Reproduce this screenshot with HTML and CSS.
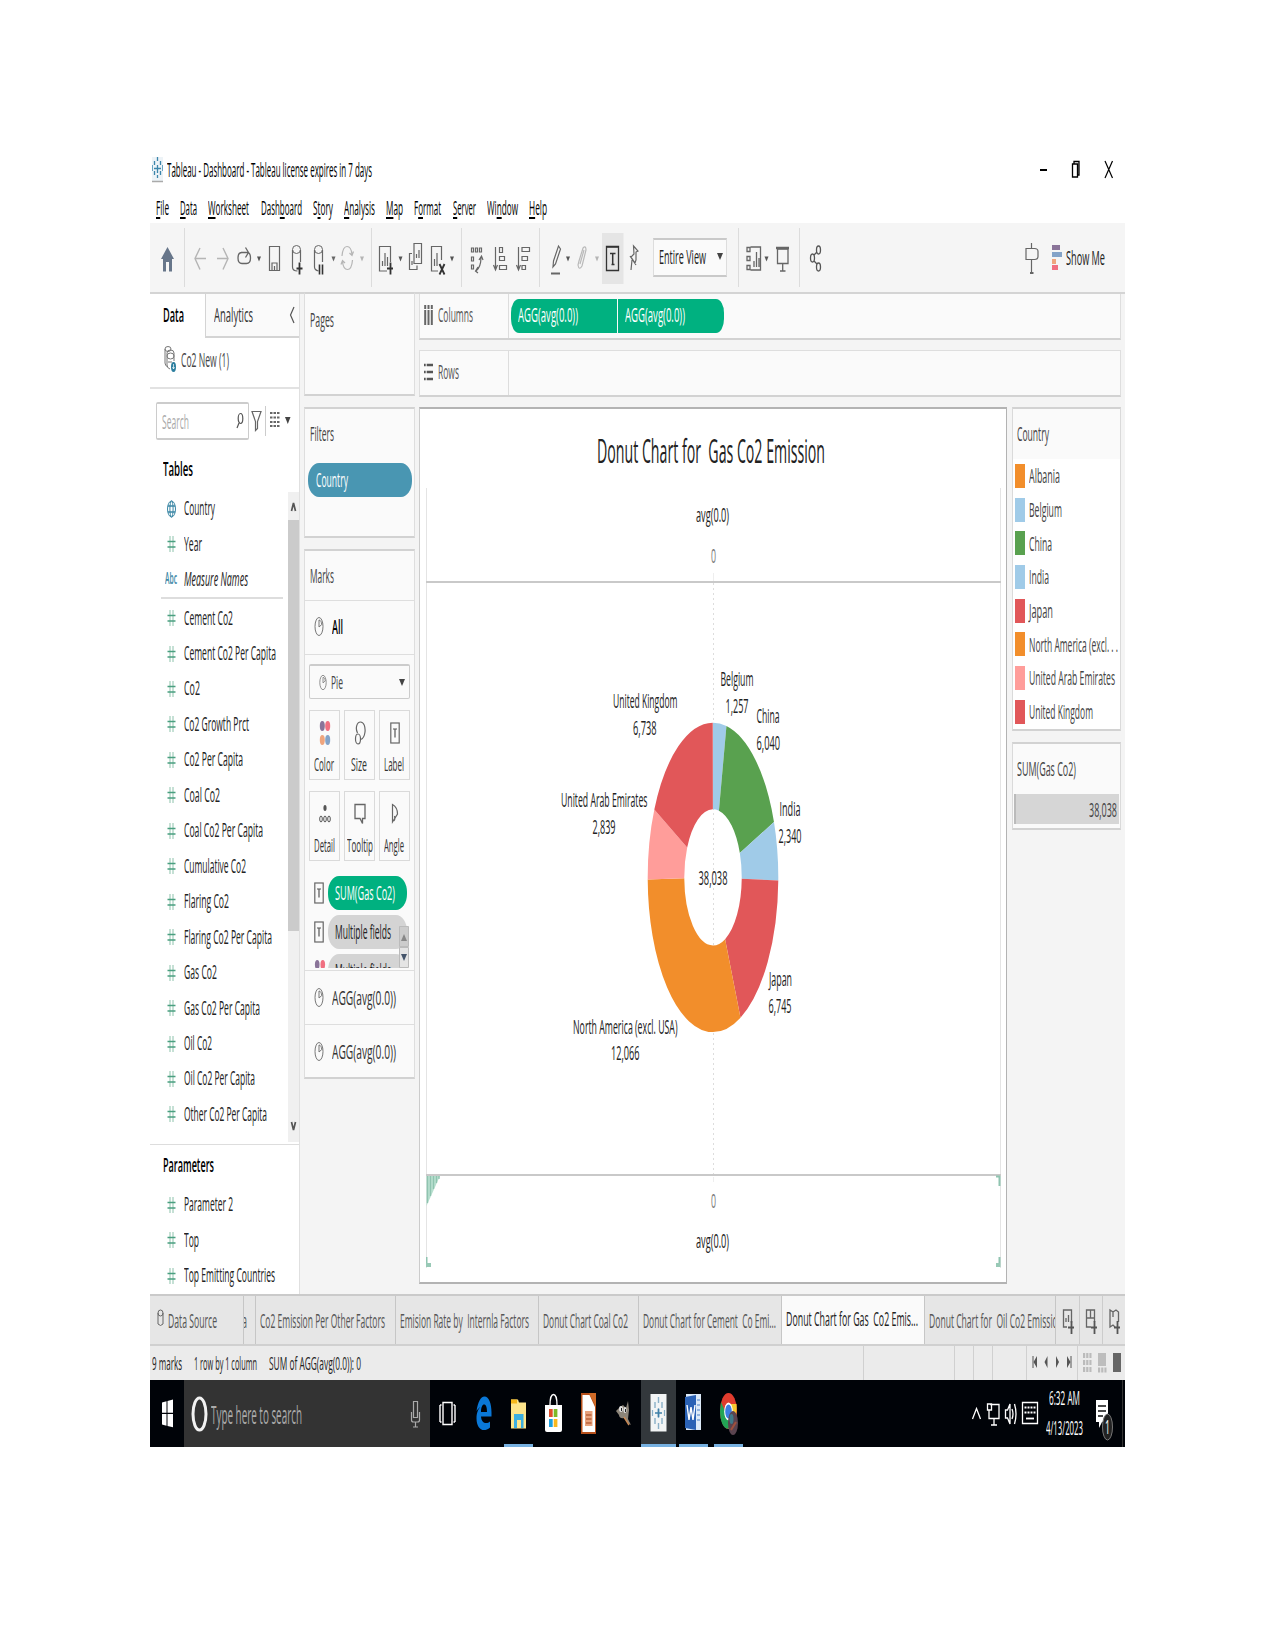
FILE: index.html
```html
<!DOCTYPE html>
<html lang="en">
<head>
<meta charset="utf-8">
<title>Tableau - Dashboard</title>
<link rel="stylesheet" href="styles.css">
</head>
<body>
<svg width="0" height="0" class="defs">
  <symbol id="hash" viewBox="0 0 9 18"><path d="M3 1v16M6 1v16" stroke="#8cc2ab" stroke-width="1"/><path d="M.5 6.5h8M.5 12h8" stroke="#4a9f80" stroke-width="1.6"/></symbol>
  <symbol id="pie" viewBox="0 0 10 21"><ellipse cx="5" cy="10.500" rx="4" ry="9" fill="none" stroke="#777"/><path d="M5 11V4c1.500 0 2.500 2 2.800 4.500z" fill="none" stroke="#777"/></symbol>
  <symbol id="tbox" viewBox="0 0 10 22"><rect x=".8" y="1" width="8.400" height="20" fill="none" stroke="#666" stroke-width="1.200"/><path d="M3 7h4M5 7v8.500" stroke="#555" stroke-width="1.200"/></symbol>
</svg>
<div class="screen">
  <header class="title">
    <svg width="12" height="26" viewBox="152 157 12 26"><path d="M152 157h11v24h-11z" fill="#edf3f7"/><path d="M152 181.500h11" stroke="#aaa" stroke-width="1.500"/><path d="M157.500 157v4M157.500 165v8M157.500 175v3M154.500 161v4M160.500 161v4M154.500 171v4M160.500 171v4M154 168.500h7" stroke="#3c86ab" stroke-width="1.300"/><path d="M152.500 165v6M162.500 165v6" stroke="#6aa5c2"/></svg>
    <span class="t" data-w="205">Tableau - Dashboard - Tableau license expires in 7 days</span>
    <svg class="push" width="90" height="40" viewBox="1030 150 90 40" fill="none" stroke="#000"><path d="M1039 168h7" stroke-width="2"/><path d="M1071.500 162h5v13h-5zM1073 162v-2.500h5V173h-1.500" stroke-width="1.300"/><path d="M1104 159l7.500 17M1111.500 159l-7.500 17" stroke-width="1.200"/></svg>
  </header>
  <nav class="menu">
    <span class="t" data-w="13"><u>F</u>ile</span><span class="t" data-w="17"><u>D</u>ata</span><span class="t" data-w="41"><u>W</u>orksheet</span><span class="t" data-w="41">Dash<u>b</u>oard</span><span class="t" data-w="20">S<u>t</u>ory</span><span class="t" data-w="31"><u>A</u>nalysis</span><span class="t" data-w="17"><u>M</u>ap</span><span class="t" data-w="27">F<u>o</u>rmat</span><span class="t" data-w="23"><u>S</u>erver</span><span class="t" data-w="31">Wi<u>n</u>dow</span><span class="t" data-w="18"><u>H</u>elp</span>
  </nav>
  <div class="toolbar">
    <svg width="34" height="69" viewBox="150 223 34 69"><path d="M161 259l6.500-12 6.500 12h-2v12.500h-3V262h-3v9.500h-3V259z" fill="#67768a"/></svg>
    <i class="sep"></i>
    <svg width="186" height="69" viewBox="185 223 186 69" fill="none" stroke="#666">
      <path d="M206 258.500h-11M200 248l-5 10.500 5 11M217 258.500h11M223 248l5 10.500-5 11" stroke="#b5b5b5" stroke-width="1.400"/>
      <path d="M242 252.500q-4 0-4 5.500t4 5.500h4.500q4 0 4-5.500 0-3.500-1.500-5M241 252.500h7M245.500 247.500l3 5-3 5" stroke-width="1.300"/>
      <path d="M269.500 246.500h10v24h-10zM272 270v-7h5v7M274.500 270v-4" stroke-width="1.200"/>
      <path d="M292.500 250v17q0 4 5 4M300.500 250v12" stroke-width="1.200"/><ellipse cx="296.500" cy="249.500" rx="4" ry="4"/><path d="M299.500 262.500v12M296.500 268.500h6" stroke="#333" stroke-width="1.800"/>
      <path d="M314.500 250v17q0 3 4 4M322.500 250v12" stroke-width="1.200"/><ellipse cx="318.500" cy="249.500" rx="4" ry="4"/><path d="M319.500 264.500v10M322.500 264.500v10" stroke="#333" stroke-width="1.600"/>
      <path d="M342 256c.5-6 2.500-9.500 5-9.500s4.500 3 5 8M352.500 260c-.5 6-2.500 9.500-5 9.500s-4.500-3-5-8M349.500 253l2.500 2.500 1.500-4M345 263l-2.500-2.500-1.500 4" stroke="#b5b5b5" stroke-width="1.200"/>
      <path d="M257 256.500h4l-2 5z" fill="#555" stroke="none"/><path d="M331.500 256.500h4l-2 5z" fill="#666" stroke="none"/><path d="M360 256.500h4l-2 5z" fill="#b5b5b5" stroke="none"/>
    </svg>
    <i class="sep"></i>
    <svg width="89" height="69" viewBox="372 223 89 69" fill="none" stroke="#666" stroke-width="1.200">
      <path d="M387 271h-7.500v-24.500h11V262M382.500 266v-5M385 266v-13M387.500 266v-9"/><path d="M390.500 262.500v12M387 268.500h6" stroke="#333" stroke-width="1.800"/>
      <path d="M414 243.500h7.500v20h-7.500zM412 253.500h-2.500v16h7.500v-4M416.500 258v-4M419 258v-8M412 265v-4"/>
      <path d="M438 271h-6.500v-24.500h10V260M434.500 266v-7M437 266v-13"/><path d="M439.500 264l5 10.500M444.500 264l-5 10.500" stroke="#333" stroke-width="1.800"/>
      <path d="M398.500 256.500h4l-2 5zM450 256.500h4l-2 5z" fill="#555" stroke="none"/>
    </svg>
    <i class="sep"></i>
    <svg width="77" height="69" viewBox="462 223 77 69" fill="none" stroke="#666" stroke-width="1.200">
      <path d="M471.500 248h2v4h-2zM475.500 248h2v4h-2zM479.500 248h2v4h-2zM471.500 257h2v4h-2zM471.500 265h2v4h-2zM481 257c0 7-1 11-5 14M479 260l2.500-4 1.500 4M478 267l-2.500 4 2.500 2"/>
      <path d="M495.500 247v23M493.500 265l2 5 2-5M499.500 247.500h3v5h-3zM499.500 256.500h5v4h-5zM499.500 265.500h7v4h-7z"/>
      <path d="M518.500 247v23M516.500 265l2 5 2-5M522 247.500h7.500v4H522zM522 256.500h5.500v4H522zM522 265.500h3.500v4H522z"/>
    </svg>
    <i class="sep"></i>
    <svg width="113" height="69" viewBox="540 223 113 69" fill="none" stroke="#666" stroke-width="1.200">
      <path d="M553.500 261l5-15 2 3-5 15-2.500 3z"/><path d="M551 273.500h9" stroke-width="2"/><path d="M566 256.500h4l-2 5z" fill="#555" stroke="none"/>
      <path d="M579 261l4-13q3-3 3 2l-4 16q-3 5-4-1zM580 264l4-14" stroke="#b9b9b9"/><path d="M595 256.500h4l-2 5z" fill="#b5b5b5" stroke="none"/>
      <path d="M602 233h21.500v51H602z" fill="#e5e5e5" stroke="none"/><path d="M606.500 246.500h12v24h-12z" stroke="#333" stroke-width="1.300"/><path d="M606 247h13M610 253.500h5.500M612.700 253.500v11M611.500 264.500h3" stroke="#333" stroke-width="1.500"/>
      <path d="M633.500 246l4.500 5-2 1v8l-1 3-4-6 3-3zM632 260l-1 10M630 256l6 9"/>
    </svg>
    <div class="select"><span class="t" data-w="47">Entire View</span><b class="caret"></b></div>
    <i class="sep s2"></i>
    <svg width="60" height="69" viewBox="739 223 60 69" fill="none" stroke="#666" stroke-width="1.300">
      <path d="M750.500 247h10v23h-10M747 247.500h3v4h-3zM747 256.500h3v4h-3zM747 265.500h3v4h-3zM754 267v-6M756.500 267v-15M759 267v-9"/><path d="M764.500 256.500h4l-2 5z" fill="#555" stroke="none"/>
      <path d="M777.500 249h10.500v14.500h-10.500zM782.700 264v7M780 271h5.500"/><path d="M776 248h13" stroke-width="2.500"/>
    </svg>
    <i class="sep"></i>
    <svg width="26" height="69" viewBox="800 223 26 69" fill="none" stroke="#555" stroke-width="1.300"><ellipse cx="812.500" cy="258" rx="2" ry="4"/><ellipse cx="818.500" cy="250" rx="2" ry="4"/><ellipse cx="818.500" cy="267" rx="2" ry="4"/><path d="M814 255l3-3M814 261l3 3"/></svg>
    <svg class="push" width="42" height="69" viewBox="1024 223 42 69" fill="none" stroke="#666" stroke-width="1.200"><path d="M1026 248.500h8.500q3.500 0 3.500 3v5q0 3-3.500 3h-8.500zM1031.500 243v5M1031.500 260v13"/><path d="M1030 273h3.500" stroke-width="2"/><g stroke="none"><path d="M1052 245h8v5h-8z" fill="#8a7499"/><path d="M1052 252h10v5h-10z" fill="#84a3c8"/><path d="M1052 259h4v5h-4z" fill="#efa57e"/><path d="M1052 265h6v5h-6z" fill="#f06f80"/></g></svg>
    <span class="t" data-w="39">Show Me</span>
  </div>

  <div class="work">
    <aside class="data">
      <div class="tabs2"><div class="tab-on"><span class="t" data-w="21">Data</span></div><div class="tab-off"><span class="t" data-w="39">Analytics</span><svg width="6" height="18" viewBox="0 0 6 18"><path d="M5 1L1.500 9 5 17" fill="none" stroke="#555" stroke-width="1.200"/></svg></div></div>
      <div class="source"><svg width="13" height="28" viewBox="164 348 13 28" fill="none" stroke="#777"><ellipse cx="168" cy="351" rx="3" ry="2.500"/><path d="M165 351v14q0 3 3 4M167 355q0-3 3.500-3t3.500 3v8M167 355v12q0 3 3 4"/><ellipse cx="170.500" cy="358" rx="3.500" ry="3"/><path d="M168 364h4"/><ellipse cx="173.500" cy="369" rx="2.500" ry="5" fill="#2d7f9f" stroke="none"/><path d="M173.500 366v5M172.500 369l1 2 1-2" stroke="#fff" stroke-width=".7"/></svg><span class="t" data-w="48">Co2 New (1)</span></div>
      <div class="searchrow">
        <div class="search"><span class="t" data-w="27">Search</span><svg width="8" height="18" viewBox="0 0 8 18" fill="none" stroke="#555" stroke-width="1.200"><ellipse cx="4.500" cy="6.500" rx="2.300" ry="5"/><path d="M3 11l-2 5"/></svg></div>
        <svg width="42" height="38" viewBox="250 402 42 38" fill="none" stroke="#666"><path d="M252 411.500h9l-3.500 10v7l-2 2v-9z" stroke-width="1.200"/><path d="M265.500 406v30" stroke="#ccc"/><path d="M270 413h9.500M270 417.500h9.500M270 422h9.500M270 426h9.500" stroke-width="1.800" stroke-dasharray="2.500 1"/><path d="M285 417h5.500l-2.700 7z" fill="#444" stroke="none"/></svg>
      </div>
      <div class="bold h-tables"><span class="t" data-w="30">Tables</span></div>
      <div class="listwrap">
        <div class="list">
          <div class="f"><svg width="9" height="18" viewBox="0 0 9 18" fill="none" stroke="#3b87a5"><ellipse cx="4.500" cy="9" rx="4" ry="8"/><ellipse cx="4.500" cy="9" rx="1.600" ry="8"/><path d="M1 6h7M1 12h7" stroke-width="1.500"/></svg><span class="t" data-w="31">Country</span></div>
          <div class="f"><svg width="9" height="18"><use href="#hash"/></svg><span class="t" data-w="18">Year</span></div>
          <div class="f"><span class="abc"><span class="t" data-w="12">Abc</span></span><em class="t" data-w="64">Measure Names</em></div>
          <hr>
          <div class="f"><svg width="9" height="18"><use href="#hash"/></svg><span class="t" data-w="49">Cement Co2</span></div>
          <div class="f"><svg width="9" height="18"><use href="#hash"/></svg><span class="t" data-w="92">Cement Co2 Per Capita</span></div>
          <div class="f"><svg width="9" height="18"><use href="#hash"/></svg><span class="t" data-w="16">Co2</span></div>
          <div class="f"><svg width="9" height="18"><use href="#hash"/></svg><span class="t" data-w="65">Co2 Growth Prct</span></div>
          <div class="f"><svg width="9" height="18"><use href="#hash"/></svg><span class="t" data-w="59">Co2 Per Capita</span></div>
          <div class="f"><svg width="9" height="18"><use href="#hash"/></svg><span class="t" data-w="36">Coal Co2</span></div>
          <div class="f"><svg width="9" height="18"><use href="#hash"/></svg><span class="t" data-w="79">Coal Co2 Per Capita</span></div>
          <div class="f"><svg width="9" height="18"><use href="#hash"/></svg><span class="t" data-w="62">Cumulative Co2</span></div>
          <div class="f"><svg width="9" height="18"><use href="#hash"/></svg><span class="t" data-w="45">Flaring Co2</span></div>
          <div class="f"><svg width="9" height="18"><use href="#hash"/></svg><span class="t" data-w="88">Flaring Co2 Per Capita</span></div>
          <div class="f"><svg width="9" height="18"><use href="#hash"/></svg><span class="t" data-w="33">Gas Co2</span></div>
          <div class="f"><svg width="9" height="18"><use href="#hash"/></svg><span class="t" data-w="76">Gas Co2 Per Capita</span></div>
          <div class="f"><svg width="9" height="18"><use href="#hash"/></svg><span class="t" data-w="28">Oil Co2</span></div>
          <div class="f"><svg width="9" height="18"><use href="#hash"/></svg><span class="t" data-w="71">Oil Co2 Per Capita</span></div>
          <div class="f"><svg width="9" height="18"><use href="#hash"/></svg><span class="t" data-w="83">Other Co2 Per Capita</span></div>
        </div>
        <div class="scroll"><svg width="11" height="28" viewBox="0 0 11 28"><path d="M3.500 19l2-8 2 8" fill="none" stroke="#555" stroke-width="1.700"/></svg><i></i><svg width="11" height="28" viewBox="0 0 11 28"><path d="M3.500 8l2 8 2-8" fill="none" stroke="#555" stroke-width="1.700"/></svg></div>
      </div>
      <div class="params">
        <div class="bold h-params"><span class="t" data-w="51">Parameters</span></div>
        <div class="f"><svg width="9" height="18"><use href="#hash"/></svg><span class="t" data-w="49">Parameter 2</span></div>
        <div class="f"><svg width="9" height="18"><use href="#hash"/></svg><span class="t" data-w="15">Top</span></div>
        <div class="f"><svg width="9" height="18"><use href="#hash"/></svg><span class="t" data-w="91">Top Emitting Countries</span></div>
      </div>
    </aside>

    <section class="cards">
      <div class="card pages"><span class="t" data-w="24">Pages</span></div>
      <div class="card filters"><span class="t" data-w="24">Filters</span><div class="pill blue"><span class="t" data-w="32">Country</span></div></div>
      <div class="card marks">
        <div class="mk-title"><span class="t" data-w="24">Marks</span></div>
        <div class="mk-row all"><svg width="10" height="21"><use href="#pie"/></svg><span class="t blk" data-w="11">All</span></div>
        <div class="mk-body">
          <div class="pie-sel"><svg width="8" height="17" viewBox="0 0 10 21"><use href="#pie"/></svg><span class="t" data-w="12">Pie</span><b class="caret"></b></div>
          <div class="btns">
            <div class="btn"><svg width="12" height="26" viewBox="0 0 12 26"><ellipse cx="3.300" cy="6" rx="2.500" ry="5" fill="#8a7499"/><ellipse cx="8.700" cy="6" rx="2.500" ry="5" fill="#f06f80"/><ellipse cx="3.300" cy="20" rx="2.500" ry="5" fill="#efa57e"/><ellipse cx="8.700" cy="20" rx="2.500" ry="5" fill="#84a3c8"/></svg><span class="t" data-w="20">Color</span></div>
            <div class="btn"><svg width="12" height="26" viewBox="0 0 12 26" fill="none" stroke="#666" stroke-width="1.200"><path d="M3.500 13C1 8 3 2 6.500 2S11.500 7 11 12c-.5 4-2.500 7-4.500 7.500"/><ellipse cx="4" cy="19" rx="2.500" ry="5"/></svg><span class="t" data-w="16">Size</span></div>
            <div class="btn"><svg width="10" height="22"><use href="#tbox"/></svg><span class="t" data-w="20">Label</span></div>
            <div class="btn"><svg width="12" height="20" viewBox="0 0 12 20"><ellipse cx="6" cy="4" rx="1.600" ry="3" fill="#555"/><g fill="none" stroke="#555"><ellipse cx="2" cy="15" rx="1.300" ry="3"/><ellipse cx="6" cy="15" rx="1.300" ry="3"/><ellipse cx="10" cy="15" rx="1.300" ry="3"/></g></svg><span class="t" data-w="21">Detail</span></div>
            <div class="btn"><svg width="12" height="22" viewBox="0 0 12 22"><path d="M1 1.500h10v14H8.500v5L6 15.500H1z" fill="none" stroke="#666" stroke-width="1.300"/></svg><span class="t" data-w="26">Tooltip</span></div>
            <div class="btn"><svg width="10" height="22" viewBox="0 0 10 22"><path d="M2.500 1.500c3.500 2 5 5 5 9.500L2.500 19zM4.500 13q1 3-.5 5" fill="none" stroke="#666" stroke-width="1.200"/></svg><span class="t" data-w="20">Angle</span></div>
          </div>
          <div class="enc">
            <div class="e"><svg width="10" height="22"><use href="#tbox"/></svg><div class="pill green"><span class="t" data-w="60">SUM(Gas Co2)</span></div></div>
            <div class="e"><svg width="10" height="22"><use href="#tbox"/></svg><div class="pill gray"><span class="t" data-w="56">Multiple fields</span></div></div>
            <div class="e"><svg width="12" height="24" viewBox="0 0 12 26"><ellipse cx="3" cy="6" rx="2.500" ry="5" fill="#8a7499"/><ellipse cx="9" cy="6" rx="2.500" ry="5" fill="#f06f80"/></svg><div class="pill gray"><span class="t" data-w="56">Multiple fields</span></div></div>
            <svg class="encscroll" width="10" height="42" viewBox="0 0 10 42"><path d="M.5.5h9v20h-9z" fill="#ccc" stroke="#bbb"/><path d="M.5 21.500h9v20h-9z" fill="#e4e4e4" stroke="#bbb"/><path d="M2 15h6L5 8z" fill="#888"/><path d="M2 28h6l-3 7z" fill="#44546a"/></svg>
          </div>
        </div>
        <div class="mk-row"><svg width="10" height="21"><use href="#pie"/></svg><span class="t" data-w="64">AGG(avg(0.0))</span></div>
        <div class="mk-row"><svg width="10" height="21"><use href="#pie"/></svg><span class="t" data-w="64">AGG(avg(0.0))</span></div>
      </div>
    </section>

    <main>
      <div class="shelf s-cols">
        <div class="lab"><svg width="9" height="20" viewBox="0 0 9 20"><path d="M1.200 0v20M4.500 0v20M7.800 0v20" stroke="#666" stroke-width="2"/><path d="M0 4.500h9" stroke="#fafafa"/></svg><span class="t" data-w="35">Columns</span></div>
        <div class="gpill l"><span class="t" data-w="60">AGG(avg(0.0))</span></div><div class="gpill r"><span class="t" data-w="60">AGG(avg(0.0))</span></div>
      </div>
      <div class="shelf s-rows">
        <div class="lab"><svg width="9" height="18" viewBox="0 0 9 18"><path d="M0 2h9M0 9h9M0 16h9" stroke="#555" stroke-width="2.500"/><path d="M2.200 0v18" stroke="#fafafa"/></svg><span class="t" data-w="21">Rows</span></div>
      </div>
      <div class="lower">
        <div class="canvas">
          <h1><span class="t" data-w="228">Donut Chart for&nbsp; Gas Co2 Emission</span></h1>
          <svg class="chart" width="575" height="780" viewBox="426 488 575 780">
            <path d="M426.500 488v780M1000.500 488v780" stroke="#e4e4e4"/>
            <path d="M713.500 583v592" stroke="#ddd" stroke-dasharray="2 3"/><path d="M713.500 573v8M713.500 1177v5" stroke="#eee"/>
            <path d="M426 582h575M426 1175h575" stroke="#c9c9c9" stroke-width="2"/>
            <path d="M426.500 1176h13.500l-13.500 30z" fill="#b8e0cf"/><path d="M427.500 1176v27M430.500 1176v20M433.500 1176v13M436.500 1176v7M439 1176v3" stroke="#8fc4b0" stroke-width="1.300"/>
            <path d="M426.500 1257v10M996 1176.500h4M999.500 1176v10M999.500 1257v10" stroke="#8fc4b0" stroke-width="2"/><path d="M426 1265h5M996 1265h4" stroke="#98c9b6" stroke-width="4"/>
            <g transform="translate(713 877.400) scale(.653 1.547) rotate(-90)" fill="none" stroke-width="56">
              <circle r="72" pathLength="38038" stroke="#a0cbe8" stroke-dasharray="1257 40000"/>
              <circle r="72" pathLength="38038" stroke="#59a14f" stroke-dasharray="0 1257 6040 40000"/>
              <circle r="72" pathLength="38038" stroke="#a0cbe8" stroke-dasharray="0 7297 2340 40000"/>
              <circle r="72" pathLength="38038" stroke="#e15759" stroke-dasharray="0 9637 6758 40000"/>
              <circle r="72" pathLength="38038" stroke="#f28e2b" stroke-dasharray="0 16395 12066 40000"/>
              <circle r="72" pathLength="38038" stroke="#ff9d9a" stroke-dasharray="0 28461 2839 40000"/>
              <circle r="72" pathLength="38038" stroke="#e15759" stroke-dasharray="0 31300 6738 40000"/>
            </g>
            <g class="ct">
              <text x="696" y="522" textLength="33" lengthAdjust="spacingAndGlyphs">avg(0.0)</text>
              <text class="tick" x="711" y="562.500" textLength="5" lengthAdjust="spacingAndGlyphs">0</text>
              <text class="tick" x="711" y="1207.500" textLength="5" lengthAdjust="spacingAndGlyphs">0</text>
              <text x="696" y="1248" textLength="33" lengthAdjust="spacingAndGlyphs">avg(0.0)</text>
              <text x="720.500" y="686" textLength="33" lengthAdjust="spacingAndGlyphs">Belgium</text>
              <text x="725.500" y="712.500" textLength="23" lengthAdjust="spacingAndGlyphs">1,257</text>
              <text x="756.500" y="723" textLength="23" lengthAdjust="spacingAndGlyphs">China</text>
              <text x="756.500" y="749.500" textLength="23.500" lengthAdjust="spacingAndGlyphs">6,040</text>
              <text x="779.500" y="816" textLength="21" lengthAdjust="spacingAndGlyphs">India</text>
              <text x="778.500" y="842.500" textLength="23" lengthAdjust="spacingAndGlyphs">2,340</text>
              <text x="769" y="986" textLength="23" lengthAdjust="spacingAndGlyphs">Japan</text>
              <text x="768.500" y="1012.500" textLength="23" lengthAdjust="spacingAndGlyphs">6,745</text>
              <text x="573" y="1034" textLength="104.500" lengthAdjust="spacingAndGlyphs">North America (excl. USA)</text>
              <text x="611" y="1060" textLength="28.500" lengthAdjust="spacingAndGlyphs">12,066</text>
              <text x="561" y="807" textLength="86.500" lengthAdjust="spacingAndGlyphs">United Arab Emirates</text>
              <text x="592.500" y="833.500" textLength="23" lengthAdjust="spacingAndGlyphs">2,839</text>
              <text x="613" y="708" textLength="64.500" lengthAdjust="spacingAndGlyphs">United Kingdom</text>
              <text x="633" y="734.500" textLength="23.500" lengthAdjust="spacingAndGlyphs">6,738</text>
              <text x="698.500" y="884.500" textLength="29" lengthAdjust="spacingAndGlyphs">38,038</text>
            </g>
          </svg>
        </div>
        <div class="legends">
          <div class="legend">
            <div class="lg-title"><span class="t" data-w="32">Country</span></div>
            <div class="lg"><i class="or"></i><span class="t" data-w="31">Albania</span></div>
            <div class="lg"><i class="lb"></i><span class="t" data-w="33">Belgium</span></div>
            <div class="lg"><i class="gr"></i><span class="t" data-w="23">China</span></div>
            <div class="lg"><i class="lb"></i><span class="t" data-w="20">India</span></div>
            <div class="lg"><i class="rd"></i><span class="t" data-w="24">Japan</span></div>
            <div class="lg"><i class="or"></i><span class="t" data-w="89">North America (excl. . .</span></div>
            <div class="lg"><i class="pk"></i><span class="t" data-w="86">United Arab Emirates</span></div>
            <div class="lg"><i class="rd"></i><span class="t" data-w="64">United Kingdom</span></div>
          </div>
          <div class="legend sum">
            <div class="lg-title"><span class="t" data-w="59">SUM(Gas Co2)</span></div>
            <div class="bar"><span class="t" data-w="28">38,038</span></div>
          </div>
        </div>
      </div>
    </main>
  </div>

  <div class="sheets">
    <div class="sh ds"><svg width="7" height="18" viewBox="0 0 7 18"><path d="M1 4v11q2.500 3 5 0V4M1 4q0-3 2.500-3T6 4t-2.500 3T1 4z" fill="none" stroke="#666"/></svg><span class="t" data-w="49">Data Source</span></div>
    <div class="sh cut"><span class="t" data-w="36">Co2 Data</span></div>
    <div class="sh w140"><span class="t" data-w="125">Co2 Emission Per Other Factors</span></div>
    <div class="sh w143"><span class="t" data-w="129">Emision Rate by&nbsp; Internla Factors</span></div>
    <div class="sh w100"><span class="t" data-w="85">Donut Chart Coal Co2</span></div>
    <div class="sh w143"><span class="t" data-w="133">Donut Chart for Cement&nbsp; Co Emi...</span></div>
    <div class="sh w143 on"><span class="t" data-w="132">Donut Chart for Gas&nbsp; Co2 Emis...</span></div>
    <div class="sh w132"><span class="t" data-w="134">Donut Chart for&nbsp; Oil Co2 Emission</span></div>
    <svg width="69" height="48" viewBox="1056 1296 69 48" fill="none" stroke="#666" stroke-width="1.300"><path d="M1079.500 1296v48M1102.500 1296v48" stroke="#ccc" stroke-width="1"/><path d="M1067 1327h-3.500v-17h8v13M1066 1322v-4M1068.500 1322v-7M1091 1327h-4.500v-17h8v12M1086.500 1318h8M1090.500 1310v8M1115 1327l-2-2-3 2v-17l3 2 3-2 2.500 2v10M1113 1312v5"/><path d="M1071.500 1321v13M1068 1327.500h6M1094.500 1321v13M1091 1327.500h6M1117.500 1321v13M1114 1327.500h6" stroke="#555" stroke-width="1.800"/></svg>
  </div>
  <div class="status">
    <span class="t" data-w="30">9 marks</span><span class="t" data-w="63">1 row by 1 column</span><span class="t" data-w="92">SUM of AGG(avg(0.0)): 0</span>
    <svg class="push" width="275" height="34" viewBox="850 1346 275 34"><path d="M863.500 1346v34M954.500 1346v34M973.500 1346v34M992.500 1346v34M1026.500 1346v34M1077.500 1346v34" stroke="#d0d0d0"/><path d="M1033 1356v12" stroke="#555"/><path d="M1071 1356v12" stroke="#555"/><path d="M1037 1356v12l-3.500-6zM1047.500 1356v12l-3-6zM1056 1356v12l3-6zM1067 1356v12l3.500-6z" fill="#555"/><path d="M1083 1355.500h8.500M1083 1362.500h8.500M1083 1369.500h8.500" stroke="#bbb" stroke-width="5" stroke-dasharray="2.200 1"/><path d="M1098 1353h8v13h-8z" fill="#bdbdbd"/><path d="M1098 1370h8.500" stroke="#bbb" stroke-width="5" stroke-dasharray="2.200 1"/><path d="M1113 1353h8v19h-8z" fill="#666"/></svg>
  </div>
  <footer class="taskbar">
    <svg width="34" height="67" viewBox="150 1380 34 67"><path d="M162 1402.500l4.500-1.300v11.500H162zM167.500 1401l5.500-1.500v13.200h-5.500zM162 1414h4.500v11.800l-4.500-1.300zM167.500 1414h5.500v13.200l-5.500-1.200z" fill="#fff"/></svg>
    <div class="tsearch"><svg width="17" height="38" viewBox="0 0 17 38"><ellipse cx="8.500" cy="19" rx="6.500" ry="16" fill="none" stroke="#f2f2f2" stroke-width="3"/></svg><span class="t" data-w="91">Type here to search</span><svg class="push" width="11" height="28" viewBox="0 0 11 28" fill="none" stroke="#aaa" stroke-width="1.200"><path d="M3.500 1.500h4v16h-4zM1.500 12v8q0 2 2 2h4q2 0 2-2v-8M5.500 22v5M3 27h5"/></svg></div>
    <svg width="325" height="67" viewBox="430 1380 325 67">
      <path d="M443 1402.500h9v22h-9zM440 1405v17M455 1405v17M440 1405h1.500M440 1422h1.500M455 1405h-1.500M455 1422h-1.500" fill="none" stroke="#fff" stroke-width="1.400"/>
      <path d="M476.500 1411c1.500-9 4-14.500 8-14.500 4.500 0 7 7 7 16v4h-10.500c.5 7 5.500 8 9 5v6c-7 6-13.500 1-13.500-9 0-6 2-10.500 5-12.500-2 1-3.500 3-5 5zM481 1412h6c0-6-1.500-7.500-3-7.500s-3 2.500-3 7.500z" fill="#0a78d7"/>
      <path d="M511 1399.500h7l1 3h7v26h-15z" fill="#fde58b"/><path d="M511 1399.500h6v4h-6z" fill="#f5b81c"/><path d="M514 1428v-14h9.500v14h-2.500v-8h-4v8z" fill="#3bafe0"/>
      <path d="M504 1444h29v3h-29z" fill="#76b0e0"/>
      <path d="M545 1405h17v25q0 2-2 2h-13q-2 0-2-2z" fill="#fff"/><path d="M550 1405c0-14 7-14 7 0" fill="none" stroke="#fff" stroke-width="1.300"/><path d="M549 1409h3.700v8H549z" fill="#e04e2a"/><path d="M553.700 1409h3.700v8h-3.700z" fill="#7db928"/><path d="M549 1419h3.700v8H549z" fill="#1ba0e0"/><path d="M553.700 1419h3.700v8h-3.700z" fill="#fbb81c"/>
      <path d="M581 1393h15v41h-15z" fill="#b6501b"/><path d="M582.500 1395h7l5.500 12v25h-12.500z" fill="#fff"/><path d="M589 1393h7v14z" fill="#d06b27"/><path d="M585 1411h7.500v15H585z" fill="#e8a27d"/><path d="M586 1415h5.500M586 1419h5.500M586 1423h5.500" stroke="#a3431a"/>
      <path d="M616 1411l4-4 3-2 3 3 2-7 1 9-1 9 3 6-3-2-4-5c-3 1-5-1-5-3z" fill="#8b8478"/><ellipse cx="621" cy="1409" rx="2" ry="3" fill="#ddd"/><ellipse cx="625" cy="1410" rx="1.500" ry="3" fill="#ddd"/><path d="M621.500 1408v3M625.500 1409v3" stroke="#222"/><path d="M624 1417l5 8" stroke="#c98a55" stroke-width="1.500"/>
      <path d="M641 1380h35v64h-35z" fill="#33383c"/><path d="M641 1444h35v3h-35z" fill="#76b0e0"/><path d="M650.500 1394h16v37.500h-16z" fill="#f2f4f5"/><path d="M658.500 1397v6M658.500 1408v10M658.500 1423v6M655 1402v6M662 1402v6M655 1418v6M662 1418v6" stroke="#8ab0c8" stroke-width="1.400"/><path d="M655 1413h7M658.500 1409v8" stroke="#3f80a8" stroke-width="1.600"/><path d="M652.500 1410v6M664.500 1410v6" stroke="#8ab0c8" stroke-width="1.200"/>
      <path d="M686 1394h15v36h-15z" fill="#dceaf8"/><path d="M685 1397l11-2v35l-11-2z" fill="#2b62b5"/><path d="M687 1405l2 15 2-13 2 13 2-15" fill="none" stroke="#fff" stroke-width="1.400"/><path d="M697 1400h3M697 1405h3M697 1410h3M697 1415h3M697 1420h3" stroke="#4a7fc7"/>
      <path d="M679 1444h29v3h-29zM714 1444h29v3h-29z" fill="#76b0e0"/>
      <ellipse cx="728.500" cy="1411" rx="8.500" ry="18" fill="#e03c2e"/><path d="M720 1411c0 9 3 18 8.500 18l4-14-8-5-3.500-8z" fill="#23a455"/><path d="M728.500 1404h8c1 10-2 25-8 25l4-14z" fill="#f7c930"/><ellipse cx="728.500" cy="1411.500" rx="4.300" ry="9" fill="#fff"/><ellipse cx="728.500" cy="1411.500" rx="3.300" ry="7" fill="#3d7de0"/><ellipse cx="733" cy="1423" rx="5" ry="12" fill="#5a4450"/><ellipse cx="731.500" cy="1419" rx="2" ry="5" fill="#3f7a8a"/><path d="M731 1430l5-8" stroke="#a0503c" stroke-width="2"/>
    </svg>
    <svg class="push" width="75" height="67" viewBox="970 1380 75 67" fill="none" stroke="#fff" stroke-width="1.300">
      <path d="M972.500 1419l4-10.500 4 10.500M990 1404.500h9v14h-10v-8M987.500 1404v6h4v-6zM994 1419v6M991 1425h6M1005.500 1410h2l2.500-6v20l-2.500-6h-2zM1012 1409q2 5 0 10M1014.500 1404q3 10 0 20"/>
      <path d="M1022.500 1402.500h15v21h-15z"/><path d="M1024.500 1407.500h11M1024.500 1412.500h11" stroke-width="2" stroke-dasharray="2 1"/><path d="M1026 1418.500h8" stroke-width="1.800"/>
    </svg>
    <div class="clock"><span class="t" data-w="31">6:32 AM</span><span class="t" data-w="37">4/13/2023</span></div>
    <svg width="37" height="67" viewBox="1088 1380 37 67"><path d="M1096 1400h12v22h-6l-3 6v-6h-3z" fill="#fff"/><path d="M1098 1406h8M1098 1411h8M1098 1416h5" stroke="#111" stroke-width="1.500"/><ellipse cx="1107.500" cy="1427" rx="5" ry="13" fill="#222" stroke="#777"/><path d="M1122.500 1380v67" stroke="#333"/><text x="1105" y="1434" font-size="20" textLength="5" lengthAdjust="spacingAndGlyphs" fill="#fff">1</text></svg>
  </footer>
</div>
<script src="fit.js"></script>
</body>
</html>
```
FILE: fit.js
```js
// Condense every label horizontally to the width given in its data-w attribute.
document.querySelectorAll('.t').forEach(function (el) {
  var want = parseFloat(el.dataset.w);
  var have = el.getBoundingClientRect().width;
  el.style.transform = 'scaleX(' + want / have + ')';
  el.style.marginRight = (want - have) + 'px';
});
```
FILE: styles.css
```css
* { box-sizing: border-box; }
body { margin: 0; width: 1275px; height: 1650px; background: #fff; overflow: hidden; font-family: "Open Sans", "Noto Sans", sans-serif; font-size: 20px; line-height: 27px; color: #222; }
.defs { display: block; height: 0; }
svg { display: block; flex: none; }
.screen { width: 975px; margin: 150px 0 0 150px; display: flex; flex-direction: column; }
.t { display: inline-block; flex: none; white-space: nowrap; transform-origin: 0 50%; }
.push { margin-left: auto !important; }
.caret { width: 0; height: 0; border: 3px solid transparent; border-top: 7px solid #444; border-bottom: 0; }

.title { height: 42px; display: flex; align-items: center; padding: 0 4px 3px 2px; gap: 3px; color: #000; }
.title .push { margin-bottom: -4px; margin-right: 0; }
.menu { height: 31px; display: flex; align-items: center; gap: 11.200px; padding: 0 0 1px 6px; color: #000; }
.menu u { text-underline-offset: 2px; text-decoration-thickness: 2px; text-decoration-skip-ink: none; }
.toolbar { height: 69px; background: #f5f5f5; display: flex; align-items: center; padding-right: 20px; }
.sep { width: 1px; height: 59px; background: #dcdcdc; flex: none; }
.sep.s2 { margin-left: 11px; }
.select { width: 74px; height: 39px; background: #fafafa; border: 1px solid #ddd; border-top: 2px solid #c9c9c9; border-bottom: 2px solid #c9c9c9; display: flex; align-items: center; padding: 0 0 2px 5px; }
.select .caret { margin-left: 11px; }

.work { height: 1002px; background: #f4f4f4; border-top: 2px solid #d4d4d4; display: flex; }
.data { width: 150px; background: #fff; border-right: 1px solid #e0e0e0; flex: none; display: flex; flex-direction: column; }
.tabs2 { height: 44px; display: flex; flex: none; }
.tab-on { width: 55px; padding: 7px 0 0 13px; font-weight: 600; color: #000; }
.tab-off { flex: 1; display: flex; align-items: center; justify-content: space-between; background: #fafafa; border-left: 1px solid #d4d4d4; border-bottom: 2px solid #d4d4d4; padding: 0 4px 1px 8px; color: #333; }
.source { height: 52px; display: flex; align-items: center; gap: 4px; padding: 0 0 5px 14px; border-bottom: 2px solid #e2e2e2; color: #444; margin-top: -1px; }
.searchrow { display: flex; gap: 1px; margin: 13px 0 0 6px; }
.search { width: 93px; height: 38px; border: 1px solid #ccc; border-width: 2px 1px; border-radius: 2px; display: flex; align-items: center; justify-content: space-between; padding: 0 4px 0 5px; color: #aaa; }
.bold { font-weight: 600; color: #000; padding-left: 13px; }
.h-tables { height: 50px; padding-top: 15px; }
.listwrap { display: flex; justify-content: space-between; height: 650px; margin-top: 2px; }
.list { flex: 1; margin-top: -2px; }
.f { height: 35.460px; display: flex; align-items: center; padding-left: 17px; gap: 8px; }
.f > svg { margin-top: 2px; }
.abc { width: 14px; margin-left: -2px; margin-right: -3px; font-size: 16px; font-weight: 600; color: #3b87a5; display: flex; }
.list hr { margin: 1px 5px 0 11px; border: 0; height: 2px; background: #ddd; }
.scroll { width: 11px; background: #f0f0f0; display: flex; flex-direction: column; }
.scroll i { height: 411px; background: #cbcbcb; }
.scroll svg:last-child { margin-top: auto; }
.params { border-top: 1px solid #ddd; margin-top: 2px; padding-top: 6px; }
.h-params { height: 35px; }

.cards { width: 111px; margin-left: 4px; flex: none; display: flex; flex-direction: column; gap: 11px; color: #444; }
.card { border: 1px solid #dedede; border-top: 2px solid #d2d2d2; border-bottom: 2px solid #d2d2d2; background: #fafafa; }
.pages { height: 104px; margin-top: -2px; padding: 12px 5px; }
.filters { height: 131px; padding: 11px 2px 0 5px; }
.pill { height: 34px; display: flex; align-items: center; border-radius: 11px / 16px; padding: 0 0 1px 8px; }
.blue { margin: 16px 0 0 -2px; background: #4996b2; color: #fff; }
.marks { height: 530px; }
.mk-title { height: 50px; padding: 11px 5px 0; border-bottom: 1px solid #dedede; }
.mk-row { height: 54px; display: flex; align-items: center; gap: 8px; padding: 0 0 1px 9px; border-bottom: 1px solid #dedede; color: #333; }
.mk-row.all { padding-bottom: 3px; }
.mk-row:last-child { border: 0; }
.blk { font-weight: 600; color: #000; }
.mk-body { height: 316px; padding: 9px 4px 0; border-bottom: 1px solid #dedede; }
.pie-sel { height: 35px; border: 1px solid #ccc; border-top-width: 2px; border-radius: 2px; display: flex; align-items: center; gap: 4px; padding-left: 9px; font-size: 18px; }
.pie-sel .caret { margin-left: auto; margin-right: 4px; }
.btns { display: grid; grid-template-columns: repeat(3, 31px); justify-content: space-between; gap: 11px 0; margin-top: 11px; color: #333; }
.btn { height: 70px; border: 1px solid #dadada; display: flex; flex-direction: column; align-items: center; justify-content: space-between; padding: 9px 0 0; font-size: 19px; }
.btn svg { height: 26px; }
.btn .t { align-self: flex-start; margin-left: 4px; margin-top: -1px; margin-bottom: 1px; }
.btn:nth-child(2) .t { margin-left: 6px; }
.btn:nth-child(5) .t { margin-left: 2px; }
.enc { height: 92px; overflow: hidden; margin-top: 15px; position: relative; margin-right: -1px; }
.e { display: flex; align-items: center; gap: 4px; padding-left: 5px; height: 34px; margin-bottom: 5px; }
.e:nth-child(3) svg { margin-right: -2px; }
.e .pill { width: 79px; padding-left: 7px; }
.green { background: #00b180; color: #fff; }
.gray { background: #d4d4d4; color: #222; }
.encscroll { position: absolute; right: 2px; bottom: 0; }

main { margin-left: 4px; width: 706px; }
.shelf { width: 702px; background: #fafafa; border: 1px solid #dedede; border-bottom: 2px solid #d2d2d2; display: flex; align-items: center; }
.s-cols { height: 46px; border-top: 0; }
.s-rows { height: 47px; margin-top: 10px; }
.lab { width: 89px; height: 100%; display: flex; align-items: center; gap: 5px; padding: 0 0 3px 4px; border-right: 1px solid #ddd; color: #555; }
.gpill { height: 34px; background: #00b180; color: #fff; display: flex; align-items: center; padding-bottom: 2px; }
.gpill.l { width: 106px; margin-left: 2px; padding-left: 7px; border-radius: 8px 0 0 8px / 14px 0 0 14px; }
.gpill.r { width: 106px; margin-left: 1px; padding-left: 7px; border-radius: 0 8px 8px 0 / 0 14px 14px 0; }
.s-cols .gpill { margin-bottom: 1px; }
.lower { display: flex; gap: 5px; margin-top: 10px; }
.canvas { width: 588px; height: 877px; background: #fff; border: 1px solid #ccc; border-top: 2px solid #b3b3b3; border-right: 1px solid #b3b3b3; border-bottom: 2px solid #b3b3b3; padding-left: 6px; }
h1 { margin: 0 0 0 171px; font-size: 33px; font-weight: 400; line-height: 44px; height: 79px; padding-top: 20px; color: #222; }
.ct { font-size: 20px; fill: #222; }
.tick { fill: #777; }
.legends { width: 109px; display: flex; flex-direction: column; gap: 11px; }
.legend { background: #fff; border: 1px solid #dadada; border-top: 2px solid #d2d2d2; border-bottom: 2px solid #d2d2d2; height: 324px; color: #444; }
.lg-title { height: 50px; background: #fafafa; padding: 11px 4px 0; }
.lg { height: 33.700px; display: flex; align-items: center; gap: 4px; padding-left: 2px; }
.lg i { width: 10px; height: 24px; }
.or { background: #f28e2b; } .lb { background: #a0cbe8; } .gr { background: #59a14f; } .rd { background: #e15759; } .pk { background: #ff9d9a; }
.legend.sum { height: 88px; background: #fafafa; }
.bar { height: 30px; margin: 0 1px; background: #d6d6d6; border-left: 2px solid #bbb; display: flex; align-items: center; justify-content: flex-end; padding-right: 2px; }

.sheets { height: 52px; background: #e6e6e6; border-top: 2px solid #cacaca; border-bottom: 2px solid #d0d0d0; display: flex; color: #555; }
.sh { border-right: 1px solid #c6c6c6; display: flex; align-items: center; padding: 0 0 0 4px; overflow: hidden; flex: none; }
.ds { width: 94px; padding-left: 7px; gap: 4px; }
.ds svg { margin-top: -4px; }
.cut { width: 12px; padding: 0 8px 0 0; justify-content: flex-end; }
.w140 { width: 140px; } .w143 { width: 143px; } .w100 { width: 100px; } .w132 { width: 131px; }
.on { background: #fafafa; padding-bottom: 4px; color: #222; }
.status { height: 34px; background: #ebebeb; display: flex; align-items: center; gap: 12px; padding-left: 2px; color: #222; font-size: 19px; }
.taskbar { height: 67px; background: #000308; display: flex; align-items: center; color: #fff; }
.tsearch { width: 246px; height: 67px; background: #333; display: flex; align-items: center; padding: 1px 9px 0 7px; gap: 3px; color: #aaa; font-size: 25px; }
.clock { display: flex; flex-direction: column; align-items: flex-start; width: 43px; height: 67px; padding: 4px 0 0 1px; gap: 3px; }
.clock .t:first-child { margin-left: 3px; }
```
